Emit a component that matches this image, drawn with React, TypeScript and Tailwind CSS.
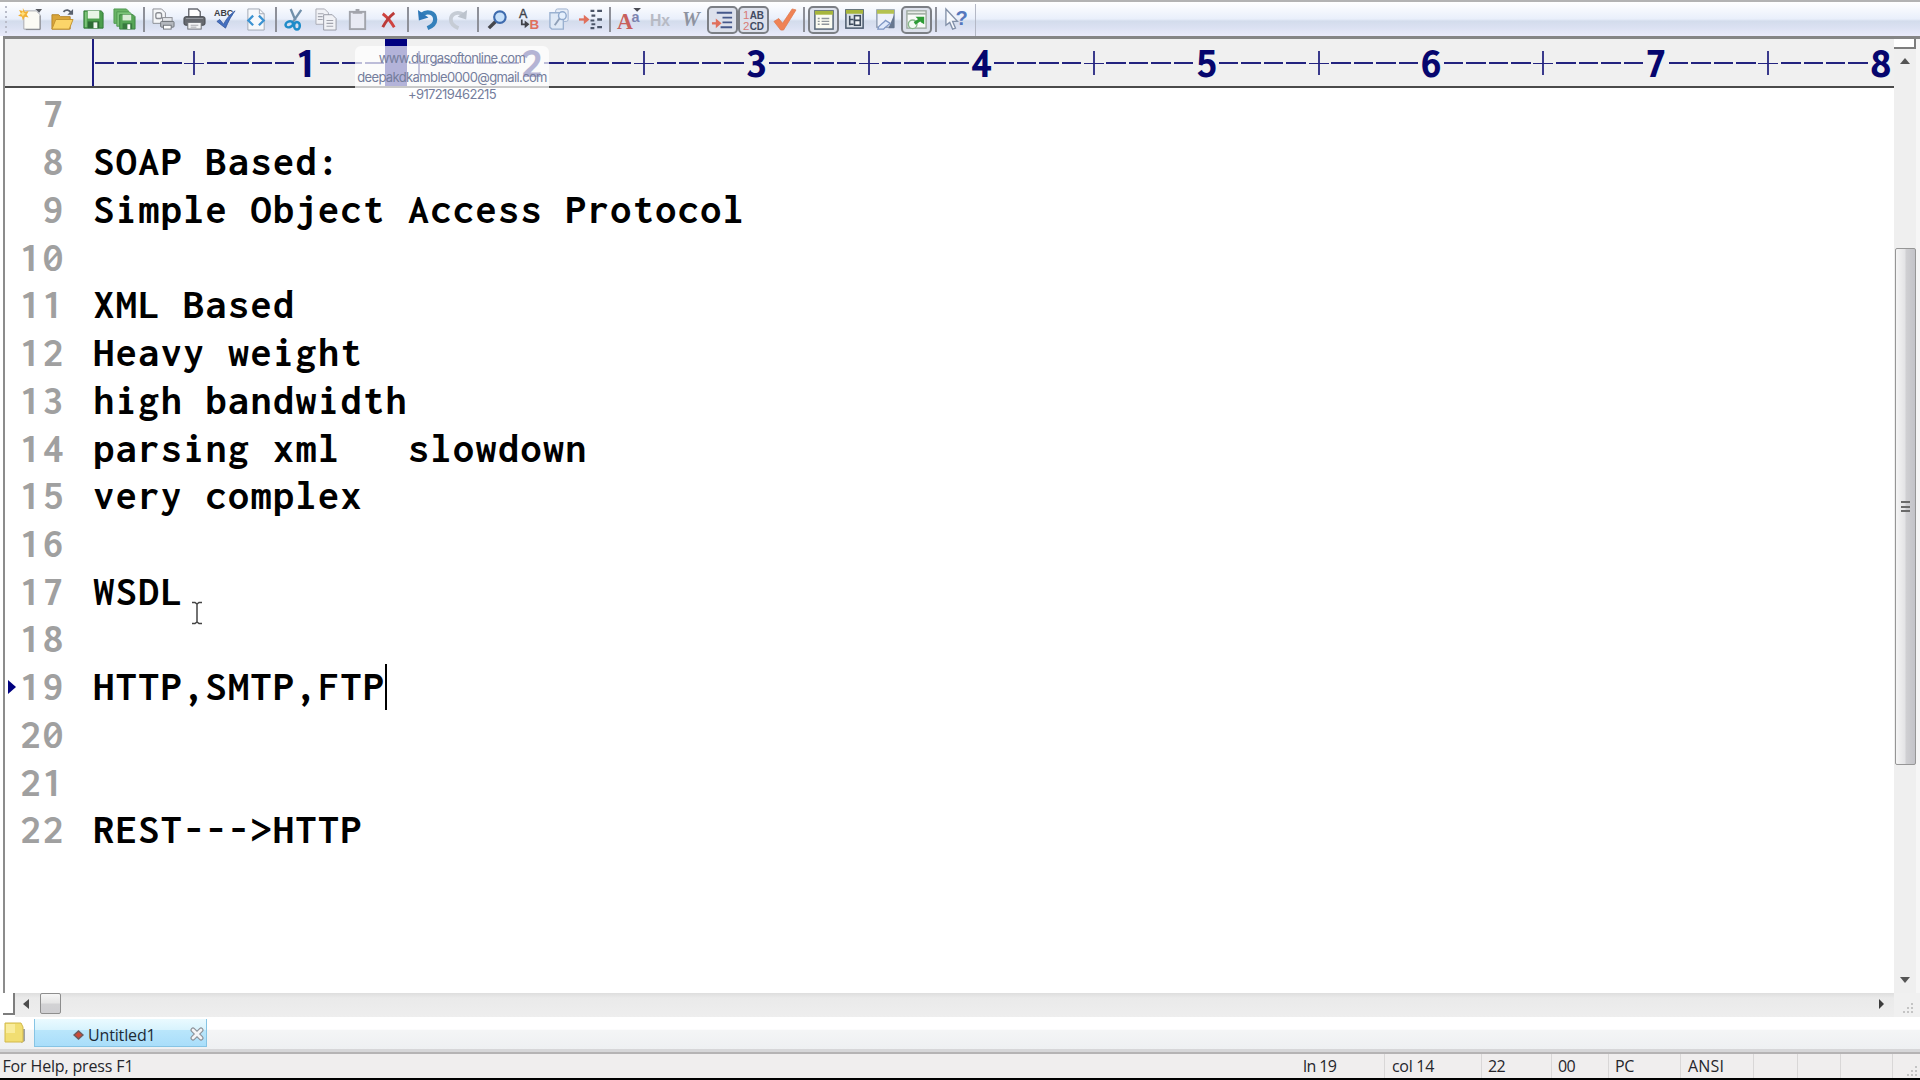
import type { ReactNode } from "react";

const MONO = "font-['Inconsolata','Liberation_Mono',monospace]";
const UI = "font-['Open_Sans','Noto_Sans',sans-serif]";

const LINES: [number, string][] = [
  [7, ""],
  [8, "SOAP Based:"],
  [9, "Simple Object Access Protocol"],
  [10, ""],
  [11, "XML Based"],
  [12, "Heavy weight"],
  [13, "high bandwidth"],
  [14, "parsing xml   slowdown"],
  [15, "very complex"],
  [16, ""],
  [17, "WSDL"],
  [18, ""],
  [19, "HTTP,SMTP,FTP"],
  [20, ""],
  [21, ""],
  [22, "REST--->HTTP"],
];

function Svg({ children }: { children: ReactNode }) {
  return (
    <svg width="23" height="23" viewBox="0 0 24 24" fill="none" className="shrink-0 overflow-visible">
      {children}
    </svg>
  );
}

const NewIcon = (
  <Svg>
    <path d="M4 3h13l4 4v15H4z" fill="#fbfaf4" stroke="#a8a9ae" />
    <path d="M6 22.500h15V8" stroke="#85868c" />
    <path d="M16 1h7l-3 4z" fill="#55585f" />
    <path d="M3 0l2 4 4-1-2 4 2 3-4-1-2 4-1-4-4-1 3-2-2-4 4 1z" fill="#f2b134" />
    <path d="M3 3l1 2 2 1-2 1-1 2-1-2-2-1 2-1z" fill="#ffdf7a" />
  </Svg>
);
const OpenIcon = (
  <Svg>
    <path d="M1 7h7l2 2h10v13H1z" fill="#d9a53a" stroke="#b5852a" />
    <path d="M1 22l4-10h18l-4 10z" fill="#fbd569" stroke="#c2922f" />
    <path d="M13 4c3-3 6-2 8 1" stroke="#59616f" strokeWidth="2" />
    <path d="M23 1v6h-6z" fill="#59616f" />
  </Svg>
);
const SaveIcon = (
  <Svg>
    <path d="M2 3h18l2 2v16H2z" fill="#4c9e4d" stroke="#2f7735" />
    <path d="M6 3h12v8H6z" fill="#e9f5e7" />
    <path d="M6 14h12v7H6z" fill="#2d6b35" />
    <path d="M12 15h4v6h-4z" fill="#eef5ee" />
    <path d="M3 4h2v16H3z" fill="#7cc479" />
  </Svg>
);
const SaveAllIcon = (
  <Svg>
    <path d="M1 1h13l2 2v13H1z" fill="#69b465" stroke="#4f9a52" />
    <path d="M4 4h13l2 2v13H4z" fill="#7cc479" stroke="#4f9a52" />
    <path d="M7 7h14l2 2v13H7z" fill="#57a657" stroke="#3c8541" />
    <path d="M10 7h9v6h-9z" fill="#d9ecd6" />
    <path d="M10 16h10v6H10z" fill="#377a3e" />
    <path d="M15 17h3v5h-3z" fill="#fff" />
  </Svg>
);
const PreviewIcon = (
  <Svg>
    <path d="M1 1h9l4 4v11H1z" fill="#f5f6f8" stroke="#8b8d93" />
    <rect x="4" y="5" width="6" height="6" rx="2" stroke="#8b8d93" strokeWidth="1.4" />
    <rect x="11" y="10" width="10" height="4" fill="#e4e6ea" stroke="#8b8d93" />
    <rect x="9" y="14" width="14" height="6" rx="1" fill="#b4b8be" stroke="#70747a" />
    <rect x="12" y="18" width="8" height="4" fill="#fff" stroke="#70747a" />
  </Svg>
);
const PrintIcon = (
  <Svg>
    <path d="M6 9V1h9l3 3v5" fill="#fff" stroke="#6b6e75" strokeWidth="1.5" />
    <rect x="1" y="9" width="22" height="9" rx="2" fill="#66696f" stroke="#44474c" />
    <path d="M3 11h18" stroke="#9a9da3" />
    <rect x="5" y="15" width="14" height="7" fill="#f3f4f5" stroke="#6b6e75" />
    <path d="M8 18h8M8 20h6" stroke="#a4a6ab" />
  </Svg>
);
const SpellIcon = (
  <Svg>
    <text x="0" y="8" fontSize="9.5" fontWeight="700" fill="#3c3e44" fontFamily="Liberation Sans, sans-serif" textLength="20" lengthAdjust="spacingAndGlyphs">ABC</text>
    <path d="M3 14l3-2 4 5C13 11 17 6 22 3c-4 5-7 11-10 18z" fill="#4470c0" stroke="#34559c" strokeWidth=".8" />
  </Svg>
);
const HtmlIcon = (
  <Svg>
    <path d="M3 1h12l5 5v17H3z" fill="#f6f8fb" stroke="#a1a8b4" />
    <path d="M15 1v5h5" stroke="#a1a8b4" />
    <path d="M8.500 8l-5 5 5 5M14.500 8l5 5-5 5" stroke="#3c93d2" strokeWidth="2.400" />
  </Svg>
);
const CutIcon = (
  <Svg>
    <path d="M7 1l5 12M18 2l-9 13" stroke="#7290ab" strokeWidth="2.4" />
    <ellipse cx="5.5" cy="17" rx="4" ry="3" transform="rotate(-20 5.5 17)" stroke="#1f8cc9" strokeWidth="2.6" />
    <ellipse cx="13.5" cy="18.5" rx="3" ry="4" stroke="#1f8cc9" strokeWidth="2.6" />
  </Svg>
);
const CopyIcon = (
  <Svg>
    <path d="M1 1h9l4 4v12H1z" fill="#f1f2f6" stroke="#a9abb4" />
    <path d="M9 7h9l4 4v12H9z" fill="#f1f2f6" stroke="#989aa4" />
    <path d="M3 6h6M3 9h5M3 12h5M12 13h7M12 16h7M12 19h7" stroke="#a3a5ae" strokeWidth="1.2" />
  </Svg>
);
const PasteIcon = (
  <Svg>
    <rect x="4" y="4" width="16" height="18" fill="#e8eaf3" stroke="#a2a4ab" strokeWidth="2" />
    <path d="M7 6V3h3V1h4v2h3v3z" fill="#a2a4ab" />
  </Svg>
);
const DeleteIcon = (
  <Svg>
    <path d="M6 6c4 3 9 9 12 14" stroke="#cf4340" strokeWidth="3" />
    <path d="M18 5C13 9 9 14 6 20" stroke="#bb3b39" strokeWidth="3" />
  </Svg>
);
const UndoIcon = (
  <Svg>
    <path d="M6 7c6-5 14-2 14 5 0 4-3 7-8 9" stroke="#3480bb" strokeWidth="4.4" />
    <path d="M2 2l1 11 10-3z" fill="#2d77b8" />
  </Svg>
);
const RedoIcon = (
  <Svg>
    <path d="M17 7C11 3 4 6 4 12c0 4 3 7 8 9" stroke="#c6ccd5" strokeWidth="4" />
    <path d="M21 2l-1 10-9-3z" fill="#bcc3cd" />
  </Svg>
);
const FindIcon = (
  <Svg>
    <path d="M10 14l-7 7" stroke="#45464c" strokeWidth="3.6" />
    <circle cx="14.5" cy="9.5" r="6" fill="#c7e0fa" stroke="#3e6bae" strokeWidth="2.2" />
  </Svg>
);
const ReplaceIcon = (
  <Svg>
    <text x="2" y="10" fontSize="13" fill="#404249" stroke="#404249" strokeWidth=".4" fontFamily="Liberation Sans, sans-serif">A</text>
    <text x="13" y="22" fontSize="14" fontWeight="700" fill="#e0705c" fontFamily="Liberation Sans, sans-serif">B</text>
    <path d="M5 12v5h5" stroke="#404249" strokeWidth="1.8" />
    <path d="M8 13l5 4-5 4z" fill="#404249" />
  </Svg>
);
const FindFilesIcon = (
  <Svg>
    <rect x="8" y="1" width="13" height="13" rx="2" fill="#e6edf7" stroke="#9db2d0" />
    <path d="M2 5h14v17H4l-2-2z" fill="#dfe9f6" stroke="#9ab1d0" strokeWidth="1.4" />
    <circle cx="15" cy="8" r="4" fill="#e5f0fd" stroke="#8fa9cd" strokeWidth="1.5" />
    <path d="M12 11l-5 7" stroke="#8fa0b8" strokeWidth="2" />
  </Svg>
);
const GotoIcon = (
  <Svg>
    <path d="M0 12h6" stroke="#e0705c" strokeWidth="2.4" />
    <path d="M5 7l6 5-6 5z" fill="#e0705c" />
    <path d="M12 3h4M13 8h4M12 13h4M13 17h4M12 21h4" stroke="#4b5568" strokeWidth="2.2" />
    <path d="M19 3h5M19 12h5M19 20h5" stroke="#4b5568" strokeWidth="2.4" />
  </Svg>
);
const FontIcon = (
  <Svg>
    <text x="-1" y="22" fontSize="23" fontWeight="700" fill="#c8605c" fontFamily="Liberation Serif, serif">A</text>
    <text x="14" y="15" fontSize="15" fontWeight="700" fill="#7d84b0" fontFamily="Liberation Sans, sans-serif">a</text>
    <path d="M16 0h8l-4 4z" fill="#4a4c55" />
  </Svg>
);
const HexIcon = (
  <Svg>
    <text x="1" y="19" fontSize="18" fontWeight="700" fill="#b7bac4" fontFamily="Liberation Sans, sans-serif" textLength="21" lengthAdjust="spacingAndGlyphs">Hx</text>
  </Svg>
);
const BoldWIcon = (
  <Svg>
    <text x="2" y="19" fontSize="21" fontWeight="700" fontStyle="italic" fill="#8e93a0" fontFamily="Liberation Serif, serif">W</text>
  </Svg>
);
const IndentIcon = (
  <Svg>
    <path d="M6 5h16M12 10h10M12 15h10M10 20h12" stroke="#46588a" strokeWidth="2" />
    <path d="M1 16h5" stroke="#e0705c" strokeWidth="2.4" />
    <path d="M5 11l6 5-6 5z" fill="#e0705c" />
  </Svg>
);
const NumbersIcon = (
  <Svg>
    <g fontFamily="Liberation Sans, sans-serif" fontSize="12">
      <text x="1" y="11" fill="#d87a76">1</text>
      <text x="1" y="23" fill="#d87a76">2</text>
      <text x="8" y="11" fontWeight="700" fill="#434b62" textLength="15" lengthAdjust="spacingAndGlyphs">AB</text>
      <text x="8" y="23" fontWeight="700" fill="#434b62" textLength="15" lengthAdjust="spacingAndGlyphs">CD</text>
    </g>
  </Svg>
);
const CheckIcon = (
  <Svg>
    <path d="M1 14l5-3 4 5L20 1l4 1-13 21H8z" fill="#ef8255" stroke="#e07a50" strokeWidth=".8" />
  </Svg>
);
const WindowIcon = (
  <Svg>
    <rect x="3" y="3" width="19" height="19" fill="#fbfcf2" stroke="#5b6a7c" strokeWidth="1.6" />
    <path d="M3 3h19v4H3z" fill="#a7b63c" />
    <path d="M6 11h2M6 14h2M6 17h2M10 11h8M10 14h8M10 17h8" stroke="#8f969c" strokeWidth="1.4" />
  </Svg>
);
const TreeIcon = (
  <Svg>
    <rect x="3" y="2" width="18" height="19" fill="#d9e0e9" stroke="#4e5d70" strokeWidth="1.6" />
    <path d="M3 2h18v4H3z" fill="#a7b63c" />
    <path d="M7 8v10M7 12h4M7 17h4" stroke="#3f4c5e" strokeWidth="1.6" />
    <rect x="12" y="8" width="6" height="5" fill="#f4f6f8" stroke="#3f4c5e" strokeWidth="1.6" />
    <rect x="12" y="13" width="6" height="5" fill="#f4f6f8" stroke="#3f4c5e" strokeWidth="1.6" />
  </Svg>
);
const ToolWindowIcon = (
  <Svg>
    <rect x="3" y="2" width="18" height="18" fill="#eef1fa" stroke="#8996ad" strokeWidth="1.4" />
    <path d="M3 2h18v4H3z" fill="#b4c150" />
    <path d="M21 7v14h-6z" fill="#66768f" />
    <path d="M4 22c1-5 5-5 8-9l5 3c-3 3-5 3-7 6z" fill="#dfe9fb" stroke="#7f97c4" strokeWidth="1.4" />
  </Svg>
);
const BrowserIcon = (
  <Svg>
    <rect x="2" y="3" width="20" height="18" fill="#f8faf8" stroke="#9aa79d" strokeWidth="1.4" />
    <path d="M2 6h20" stroke="#a8b3aa" strokeWidth="2" />
    <circle cx="8" cy="17" r="4.5" fill="#f3faf3" stroke="#88b78a" strokeWidth="1.4" />
    <path d="M10 16l6-4" stroke="#2e9c36" strokeWidth="3.4" />
    <path d="M11 9h9v8l-3-2z" fill="#2e9c36" />
  </Svg>
);
const HelpIcon = (
  <Svg>
    <path d="M2 1v17l4-3 3 7 3-1-3-7h5z" fill="#f7f9fd" stroke="#8290a8" strokeWidth="1.4" />
    <text x="12" y="18" fontSize="21" fontWeight="700" fill="#5577bd" fontFamily="Liberation Sans, sans-serif">?</text>
  </Svg>
);

const GROUPS: { icon: ReactNode; on?: boolean }[][] = [
  [{ icon: NewIcon }, { icon: OpenIcon }, { icon: SaveIcon }, { icon: SaveAllIcon }],
  [{ icon: PreviewIcon }, { icon: PrintIcon }, { icon: SpellIcon }, { icon: HtmlIcon }],
  [{ icon: CutIcon }, { icon: CopyIcon }, { icon: PasteIcon }, { icon: DeleteIcon }],
  [{ icon: UndoIcon }, { icon: RedoIcon }],
  [{ icon: FindIcon }, { icon: ReplaceIcon }, { icon: FindFilesIcon }, { icon: GotoIcon }],
  [
    { icon: FontIcon },
    { icon: HexIcon },
    { icon: BoldWIcon },
    { icon: IndentIcon, on: true },
    { icon: NumbersIcon, on: true },
    { icon: CheckIcon },
  ],
  [{ icon: WindowIcon, on: true }, { icon: TreeIcon }, { icon: ToolWindowIcon }, { icon: BrowserIcon, on: true }],
  [{ icon: HelpIcon }],
];

function Toolbar() {
  return (
    <div className="flex h-[36px] shrink-0 items-stretch border-t-2 border-[#b3b3b3] bg-[linear-gradient(to_bottom,#ffffff_0%,#e9effb_50%,#d3dcec_56%,#dbe1f2_75%,#eaebfa_100%)]">
      <div className="flex w-[16px] flex-col items-start justify-center gap-[3px] pl-[5px]">
        {[0, 1, 2, 3, 4, 5].map((i) => (
          <span key={i} className="size-[2px] bg-[#b9bcc9]" />
        ))}
      </div>
      {GROUPS.map((g, i) => (
        <div key={i} className="flex items-center pt-px">
          {g.map((b, j) => (
            <div
              key={j}
              className={
                b.on
                  ? "flex h-[28px] w-[31px] items-center justify-center rounded-[5px] border-2 border-[#7c7f85] bg-[#dde1ec]"
                  : "flex h-[28px] w-[31px] items-center justify-center"
              }
            >
              {b.icon}
            </div>
          ))}
          {i < GROUPS.length - 1 ? (
            <div className="flex w-[8px] justify-center">
              <span className="h-[25px] w-[1.5px] bg-[#8e9099]" />
            </div>
          ) : (
            <span className="ml-[4px] h-[32px] w-px bg-[#b4b8c6]" />
          )}
        </div>
      ))}
    </div>
  );
}

function RulerCell({ index }: { index: number }) {
  const k = index + 1;
  if (k % 10 === 0) {
    return (
      <span className={`w-[22.485px] shrink-0 text-center text-[43px] leading-[50px] font-extrabold text-[#06066e] ${MONO}`}>
        {k / 10}
      </span>
    );
  }
  if (k % 10 === 5) {
    return (
      <span className="flex w-[22.485px] shrink-0 flex-col items-center">
        <span className="h-[12px] w-[2px] bg-[#3a3a8c]" />
        <span className="h-[1.5px] w-[20px] bg-[#23237f]" />
        <span className="h-[11px] w-[2px] bg-[#3a3a8c]" />
      </span>
    );
  }
  return (
    <span className="flex w-[22.485px] shrink-0 justify-center">
      <span className="h-[1.5px] w-[19.5px] bg-[#23237f]" />
    </span>
  );
}

function Ruler() {
  return (
    <div className="relative flex h-[49px] shrink-0 border-b-2 border-[#4a4a4a] bg-[#f0f0f0]">
      <div className="w-[87px] shrink-0" />
      <div className="h-full w-[2px] shrink-0 bg-[#1d1d80]" />
      <div className="-ml-[0.8px] flex min-w-0 items-center pt-px">
        {Array.from({ length: 80 }, (_, i) => (
          <RulerCell key={i} index={i} />
        ))}
      </div>
      <div className="absolute top-0 left-[380px] h-full w-[22px] bg-[#00007f]" />
    </div>
  );
}

function Watermark() {
  return (
    <div className="absolute top-[46px] left-[355px] w-[194px] text-center font-['Inter',sans-serif] text-[13px] leading-[19px] font-normal tracking-[-0.62px] whitespace-nowrap text-[#747d9c]">
      <div className="h-[43px] rounded-t-[6px] bg-white/70 pt-[2.5px]">
        <div>www.durgasoftonline.com</div>
        <div>deepakdkamble0000@gmail.com</div>
      </div>
      <div className="-mt-[4px]">+917219462215</div>
    </div>
  );
}

function Editor() {
  return (
    <div className={`relative min-h-0 flex-1 overflow-hidden bg-white pt-[2px] text-[42px] font-[750] tracking-[1.485px] whitespace-pre ${MONO}`}>
      {LINES.map(([n, text]) => (
        <div key={n} className="flex h-[47.74px] items-center">
          <div className="flex w-[15px] shrink-0 items-center pl-[3px]">
            {n === 19 && (
              <svg width="8" height="14" viewBox="0 0 8 14">
                <path d="M0 0l8 7-8 7z" fill="#00007f" />
              </svg>
            )}
          </div>
          <span className="w-[45px] shrink-0 text-right text-[#a0a0a0]">{n}</span>
          <span className="ml-[28.2px] text-black">{text}</span>
          {n === 19 && <span className="-ml-px h-[46px] w-[2px] bg-black" />}
        </div>
      ))}
      <svg width="12" height="24" viewBox="0 0 12 24" fill="none" className="absolute top-[513px] left-[186px]">
        <path d="M1 1.500h3l2 1.500 2-1.500h3M6 3v18M1 22.500h3L6 21l2 1.500h3" stroke="#444" strokeWidth="1.5" />
      </svg>
    </div>
  );
}

function Grip() {
  return (
    <svg width="11" height="11" viewBox="0 0 11 11" fill="#c4c4c4">
      <path d="M8 0h2v2H8zM4 4h2v2H4zM8 4h2v2H8zM0 8h2v2H0zM4 8h2v2H4zM8 8h2v2H8z" />
    </svg>
  );
}

function VScroll() {
  return (
    <div className="flex w-[26px] shrink-0 flex-col bg-[#f6f6f6]">
      <div className="h-[10px] w-[22px] shrink-0 border-r-2 border-b-2 border-[#7d7d7d] bg-white" />
      <div className="flex w-[22px] flex-1 flex-col items-center bg-[#efefef]">
        <svg width="10" height="6" viewBox="0 0 10 6" className="mt-[9px]">
          <path d="M0 6l5-6 5 6z" fill="#555" />
        </svg>
        <div className="mt-[184px] flex h-[517px] w-[21px] flex-col items-center justify-center gap-[2.5px] rounded-[2px] border border-[#969696] bg-[linear-gradient(to_right,#f5f5f5,#e4e4e6_45%,#cfcfd2_55%,#c3c3c8)]">
          <span className="h-[2px] w-[9px] bg-[#6a6a6a]" />
          <span className="h-[2px] w-[9px] bg-[#6a6a6a]" />
          <span className="h-[2px] w-[9px] bg-[#6a6a6a]" />
        </div>
        <svg width="10" height="6" viewBox="0 0 10 6" className="mt-auto mb-[10px]">
          <path d="M0 0h10L5 6z" fill="#555" />
        </svg>
      </div>
    </div>
  );
}

function HScroll() {
  return (
    <div className="flex h-[24px] shrink-0 bg-[linear-gradient(to_bottom,#dedede,#eaeaea_20%,#eeeeee)]">
      <div className="flex w-[12px] shrink-0 flex-col bg-white">
        <div className="h-[22px] border-r-2 border-b-2 border-[#7d7d7d]" />
      </div>
      <svg width="6" height="10" viewBox="0 0 6 10" className="mt-[5.5px] ml-[8px]">
        <path d="M6 0v10L0 5z" fill="#4c4c4c" />
      </svg>
      <div className="ml-[11px] h-[21px] w-[21px] rounded-[2px] border border-[#8e8e8e] bg-[linear-gradient(to_bottom,#f6f6f6,#e6e6e6_45%,#d2d2d4_55%,#cfcfd2)]" />
      <svg width="5" height="10" viewBox="0 0 5 10" className="mt-[5.5px] ml-auto">
        <path d="M0 0v10l5-5z" fill="#3c3c3c" />
      </svg>
      <div className="ml-[10px] flex w-[26px] items-end bg-[#f0f0f0] pb-[3px] pl-[9px]">
        <Grip />
      </div>
    </div>
  );
}

function Tabs() {
  return (
    <div className="flex h-[35px] shrink-0 border-b-[3px] border-[#d6d6d8] bg-[linear-gradient(to_bottom,#ffffff_38%,#f4f5f6_42%,#eef0f2)]">
      <svg width="22" height="24" viewBox="0 0 22 24" className="mt-[4px] ml-[4px]">
        <path d="M18 8h3v12l-4 2z" fill="#9ea1a3" />
        <path d="M1 2h16l2 4v15H1z" fill="#f1de72" stroke="#d2b94a" />
        <path d="M2 3h9v9H2z" fill="#f9ec9c" />
      </svg>
      <div className={`mt-[2px] ml-[8px] flex h-[28px] w-[173px] items-center border-x-[1.5px] border-b border-[#86c4e4] bg-[linear-gradient(to_bottom,#eafaff_0%,#d8f3fd_40%,#b9e6fb_42%,#a9defa_100%)] text-[16px] tracking-[-0.15px] text-[#1c2a36] ${UI}`}>
        <svg width="11" height="10" viewBox="0 0 11 10" className="mt-[5px] ml-[38px]">
          <path d="M5.500 0L11 5l-5.500 5L0 5z" fill="#6b5b5e" />
          <path d="M5.500 2L9 5 5.500 8 2 5z" fill="#cb4a38" />
        </svg>
        <span className="mt-[5px] ml-[4px] leading-none">Untitled1</span>
        <svg width="14" height="14" viewBox="0 0 14 14" fill="none" className="mt-[3px] mr-[2px] ml-auto">
          <path d="M3 3l8 8M11 3l-8 8" stroke="#8c9097" strokeWidth="5" strokeLinecap="round" />
          <path d="M3 3l8 8M11 3l-8 8" stroke="#f4f4f6" strokeWidth="2.8" strokeLinecap="round" />
        </svg>
      </div>
    </div>
  );
}

function StatusBar() {
  return (
    <div className={`flex h-[26px] shrink-0 items-stretch border-t-2 border-[#b5b3b4] bg-[#f0eeee] text-[16px] leading-[25px] tracking-[-0.35px] whitespace-nowrap text-[#26262c] ${UI}`}>
      <span className="w-[1303px] pl-[2.5px] tracking-[-0.15px]">For Help, press F1</span>
      <span className="w-[81px] tracking-[-0.6px]">ln 19</span>
      <span className="w-[97px] border-l border-[#d9d7d7] pl-[7px] tracking-[-0.3px]">col 14</span>
      <span className="w-[70px] border-l border-[#d9d7d7] pl-[6px] tracking-[-0.7px]">22</span>
      <span className="w-[57px] border-l border-[#d9d7d7] pl-[6px] tracking-[-0.7px]">00</span>
      <span className="w-[72px] border-l border-[#d9d7d7] pl-[6px]">PC</span>
      <span className="w-[73px] border-l border-[#d9d7d7] pl-[7px] tracking-[0.2px]">ANSI</span>
      <span className="w-[44px] border-l border-[#d9d7d7]" />
      <span className="w-[43px] border-l border-[#d9d7d7]" />
      <span className="w-[52px] border-l border-[#d9d7d7]" />
      <span className="flex flex-1 items-end border-l border-[#d9d7d7] pb-px pl-[14px]">
        <Grip />
      </span>
    </div>
  );
}

export default function App() {
  return (
    <div className="relative flex h-[1080px] w-[1920px] flex-col overflow-hidden bg-white">
      <Toolbar />
      <div className="ml-[3px] flex min-h-0 flex-1 flex-col border-t-[3px] border-[#858585]">
        <div className="flex min-h-0 flex-1">
          <div className="flex w-[1891px] shrink-0 flex-col overflow-hidden border-l-2 border-[#8c8c8c]">
            <Ruler />
            <Editor />
          </div>
          <VScroll />
        </div>
        <HScroll />
      </div>
      <Tabs />
      <StatusBar />
      <div className="h-[2px] shrink-0 bg-black" />
      <Watermark />
    </div>
  );
}
